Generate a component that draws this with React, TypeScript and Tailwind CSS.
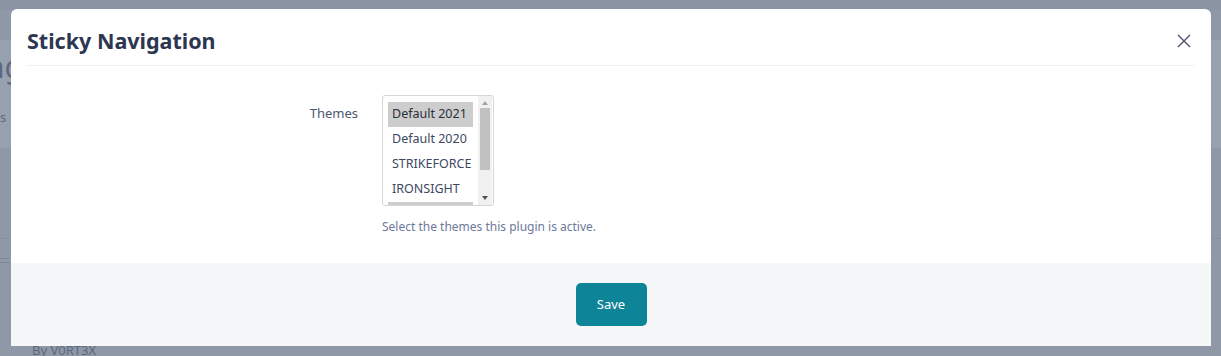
import React from 'react';

const themes = ['Default 2021', 'Default 2020', 'STRIKEFORCE', 'IRONSIGHT'];

export default function App() {
  return (
    <div className="relative w-[1221px] h-[356px] overflow-hidden bg-[#8e98a6] font-['Noto_Sans',sans-serif]">
      {/* page behind the overlay */}
      <div className="absolute inset-0 pointer-events-none">
        <div className="absolute left-0 top-0 w-full h-[10px] bg-[#8a94a3]" />
        <div className="absolute left-0 top-[40px] w-full h-[108px] bg-[#97a1ae]" />
        <div className="absolute left-[-14px] top-[44px] text-[30px] text-[#5d6880]">ng</div>
        <div className="absolute left-[-8px] top-[108px] text-[13px] text-[#5d6880]">ns</div>
        <div className="absolute left-0 top-[258px] w-[10px] h-[1px] bg-[#7d8797]" />
        <div className="absolute left-0 top-[262px] w-[10px] h-[1px] bg-[#7d8797]" />
        <div className="absolute left-0 top-[238px] w-full h-[1px] bg-[#87919f]" />
        <div className="absolute left-[32px] top-[341px] text-[13px] text-[#5d6880]">By V0RT3X</div>
      </div>

      {/* modal */}
      <div className="relative mt-[9px] ml-[11px] w-[1200px] h-[337px] bg-white rounded-t-[6px] flex flex-col">
        <div className="mx-[16px] h-[57px] flex items-center justify-between border-b border-[#eef0f3]">
          <h1 className="text-[21.5px] font-bold text-[#2d3650] pt-[8px]">Sticky Navigation</h1>
          <button className="w-[20px] h-[20px] flex items-center justify-center mr-[1px] mt-[7px] text-[#4a5370]">
            <svg width="14" height="14" viewBox="0 0 14 14" fill="none" stroke="currentColor" strokeWidth="1.4">
              <path d="M1 1L13 13M13 1L1 13" />
            </svg>
          </button>
        </div>

        <div className="flex-1 flex pt-[29px]">
          <div className="w-[347px] text-right text-[13px] text-[#4b5671] pt-[9px]">Themes</div>
          <div className="ml-[24px] flex flex-col">
            <div className="w-[112px] h-[111px] border border-[#d3d6dc] rounded-[3px] flex overflow-hidden">
              <div className="w-[85px] ml-[5px] pt-[6px] flex flex-col">
                {themes.map((t, i) => (
                  <div
                    key={t}
                    className={
                      'h-[25px] shrink-0 flex items-center pl-[4px] text-[12.5px] whitespace-nowrap ' +
                      (i === 0 ? 'bg-[#cdcdcd] text-[#2b2f3a]' : 'text-[#3e4863]')
                    }
                  >
                    {t}
                  </div>
                ))}
                {/* next selected option, scrolled out of view */}
                <div className="h-[4px] shrink-0 bg-[#cdcdcd]" />
              </div>
              <div className="flex-1" />
              <div className="w-[14px] flex flex-col items-center bg-[#f1f1f1] mr-[1px]">
                <svg width="8" height="10" viewBox="0 0 8 10" className="mt-[2px]">
                  <path d="M1 7L4 3L7 7Z" fill="#a3a3a3" />
                </svg>
                <div className="w-[10px] h-[62px] bg-[#c1c1c1]" />
                <div className="flex-1" />
                <svg width="8" height="10" viewBox="0 0 8 10" className="mb-[2px]">
                  <path d="M1 3L4 7L7 3Z" fill="#505050" />
                </svg>
              </div>
            </div>
            <p className="mt-[12px] text-[12px] text-[#6c789a]">Select the themes this plugin is active.</p>
          </div>
        </div>

        <div className="h-[83px] bg-[#f5f7f9] flex items-center justify-center">
          <button className="w-[71px] h-[43px] rounded-[5px] bg-[#0e8499] text-white text-[13px]">Save</button>
        </div>
      </div>
    </div>
  );
}
